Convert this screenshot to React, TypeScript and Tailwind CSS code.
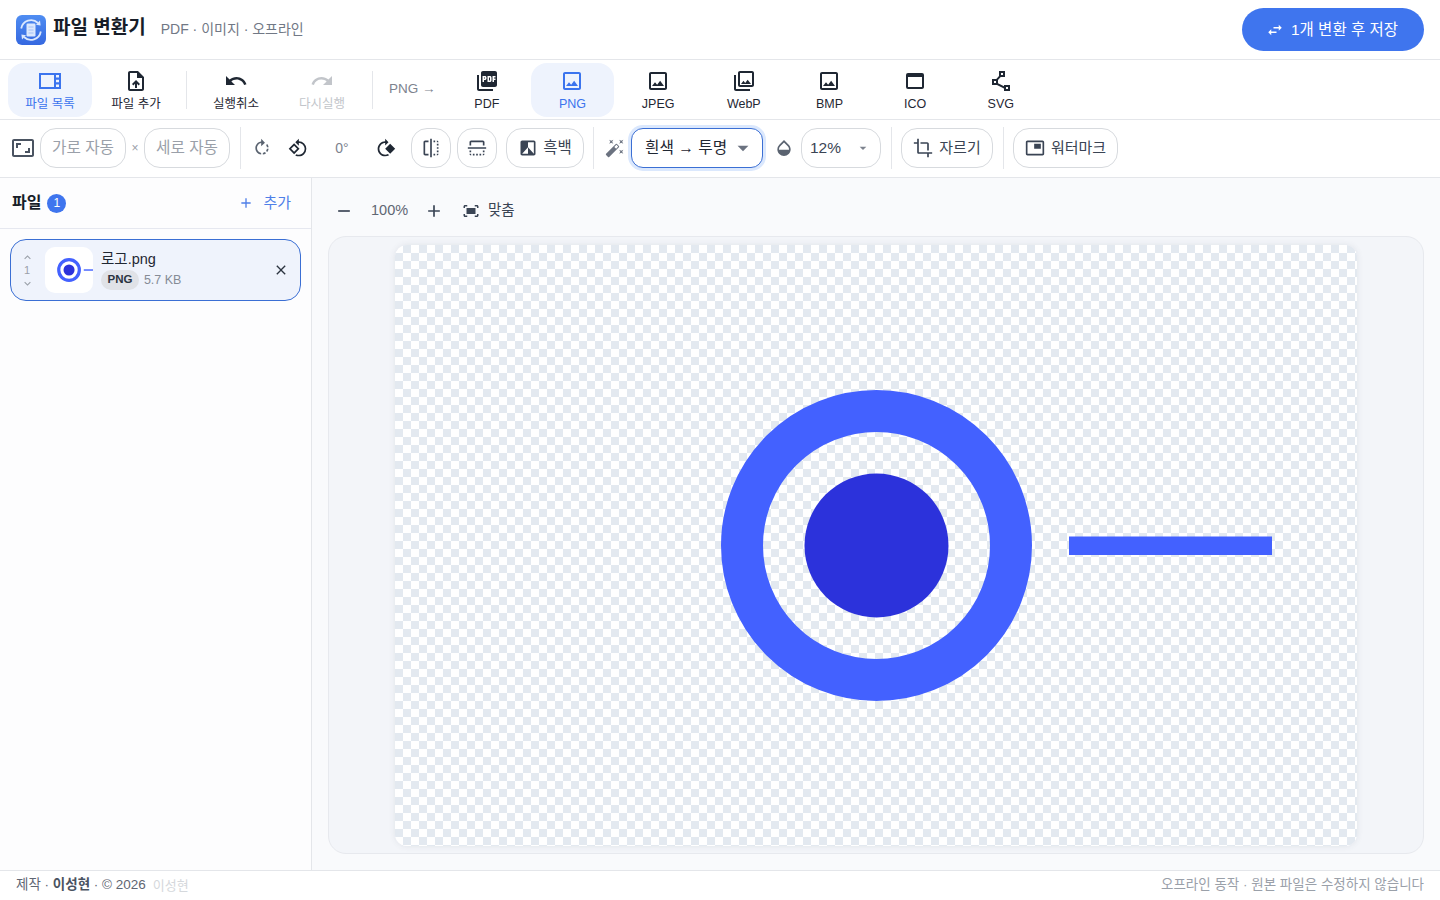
import React from "react";
import {
  MdOutlineUploadFile, MdUndo, MdRedo, MdPictureAsPdf, MdOutlineImage, MdOutlinePhotoLibrary,
  MdOutlineWebAsset, MdOutlinePolyline, MdOutlineAspectRatio, MdRotateRight, MdOutlineRotate90DegreesCcw,
  MdRotate90DegreesCw, MdFlip, MdFilterBAndW, MdAutoFixHigh, MdOpacity, MdCrop, MdPictureInPicture,
  MdFitScreen, MdSwapHoriz, MdAdd, MdRemove, MdClose, MdKeyboardArrowUp, MdKeyboardArrowDown, MdArrowDropDown,
} from "react-icons/md";

const font = { fontFamily: '"Liberation Sans", "Noto Sans CJK KR", sans-serif' };

function FileListIcon() {
  return (
    <svg width="24" height="24" viewBox="0 0 24 24" fill="currentColor">
      <path fillRule="evenodd" d="M1 4h22v16H1zM3 6v12h13V6zM18 6v2.5h3V6zM18 10.7v2.6h3v-2.6zM18 15.5V18h3v-2.5z" />
    </svg>
  );
}

function Logo() {
  return (
    <svg width="30" height="30" viewBox="0 0 30 30">
      <defs>
        <linearGradient id="lg" x1="0" y1="0" x2="0" y2="1">
          <stop offset="0" stopColor="#4f8df2" />
          <stop offset="1" stopColor="#3568e0" />
        </linearGradient>
      </defs>
      <rect width="30" height="30" rx="6" fill="url(#lg)" />
      <path d="M5.2 13.5A10 10 0 0 1 22 8" fill="none" stroke="#dbe8fd" strokeWidth="1.8" />
      <path d="M24.8 16.5A10 10 0 0 1 8 22" fill="none" stroke="#dbe8fd" strokeWidth="1.8" />
      <path d="M20 9.8l4.6.6-.6-4.8z" fill="#dbe8fd" />
      <path d="M10 20.2l-4.6-.6.6 4.8z" fill="#dbe8fd" />
      <rect x="10.5" y="8.5" width="9" height="13" rx="1.2" fill="#dbe8fd" />
      <path d="M12.5 12h5M12.5 15h5M12.5 18h5" stroke="#9dbcf5" strokeWidth="0.9" />
    </svg>
  );
}

function TopBtn({ icon, label, active, disabled, className = "w-[84px]" }: { icon: React.ReactNode; label: string; active?: boolean; disabled?: boolean; className?: string }) {
  const color = active ? "text-[#3b74ee] bg-[#eef3fd]" : disabled ? "text-[#c2c5ca]" : "text-[#1f2733]";
  return (
    <div className={`${className} h-[54px] shrink-0 rounded-2xl flex flex-col items-center justify-center pt-[1px] ${color}`}>
      <div className="h-[24px] w-[24px] mb-[4px]">{icon}</div>
      <div className="text-[12.5px] leading-[15px]">{label}</div>
    </div>
  );
}

function Pill({ children, className = "" }: { children: React.ReactNode; className?: string }) {
  return (
    <div className={`h-[40px] shrink-0 rounded-2xl border border-[#d7dade] bg-white flex items-center justify-center text-[#3a4454] ${className}`}>
      {children}
    </div>
  );
}

const Sep = ({ className = "" }: { className?: string }) => <div className={`w-px bg-[#e4e6ea] shrink-0 ${className}`} />;

function LogoArt({ className }: { className?: string }) {
  return (
    <svg viewBox="0 0 962 601" className={className}>
      <circle cx="481.5" cy="300.5" r="134.5" fill="none" stroke="#4361ff" strokeWidth="42" />
      <circle cx="481.5" cy="300.5" r="72" fill="#2c32db" />
      <rect x="674" y="291.5" width="203" height="18.5" fill="#4361ff" />
    </svg>
  );
}

export default function App() {
  return (
    <div style={font} className="w-[1440px] h-[900px] flex flex-col overflow-hidden bg-white text-[#1f2733]">
      {/* Header */}
      <header className="h-[60px] shrink-0 border-b border-[#e4e6ea] flex items-center justify-between pl-4 pr-4">
        <div className="flex items-center">
          <Logo />
          <div className="ml-[7px] text-[19px] font-bold leading-[24px] text-[#171d28] -mt-[3px]">파일 변환기</div>
          <div className="ml-[15px] text-[14px] text-[#717885]">PDF · 이미지 · 오프라인</div>
        </div>
        <div className="w-[182px] h-[43px] rounded-full bg-[#3f75ee] text-white flex items-center justify-center gap-[7px] text-[15.5px] pr-[2px]">
          <MdSwapHoriz size={18} />
          <span>1개 변환 후 저장</span>
        </div>
      </header>

      {/* Toolbar 1 */}
      <div className="h-[60px] shrink-0 border-b border-[#e4e6ea] flex items-center pl-2 gap-[2px]">
        <TopBtn active label="파일 목록" icon={<FileListIcon />} />
        <TopBtn label="파일 추가" icon={<MdOutlineUploadFile size={24} />} />
        <Sep className="h-[38px] ml-[6px] mr-[5px]" />
        <TopBtn label="실행취소" icon={<MdUndo size={24} />} />
        <TopBtn disabled label="다시실행" icon={<MdRedo size={24} />} />
        <Sep className="h-[38px] ml-[6px] mr-[5px]" />
        <div className="w-[63px] pl-[9px] text-[13.5px] text-[#7d838e] -mt-[1px] shrink-0">PNG →</div>
        <TopBtn className="w-[83.67px]" label="PDF" icon={<MdPictureAsPdf size={24} />} />
        <TopBtn className="w-[83.67px]" active label="PNG" icon={<MdOutlineImage size={24} />} />
        <TopBtn className="w-[83.67px]" label="JPEG" icon={<MdOutlineImage size={24} />} />
        <TopBtn className="w-[83.67px]" label="WebP" icon={<MdOutlinePhotoLibrary size={24} />} />
        <TopBtn className="w-[83.67px]" label="BMP" icon={<MdOutlineImage size={24} />} />
        <TopBtn className="w-[83.67px]" label="ICO" icon={<MdOutlineWebAsset size={24} />} />
        <TopBtn className="w-[83.67px]" label="SVG" icon={<MdOutlinePolyline size={24} />} />
      </div>

      {/* Toolbar 2 */}
      <div className="h-[58px] shrink-0 border-b border-[#e4e6ea] flex items-center pl-[11px] pb-[1px] text-[#3a4454]">
        <MdOutlineAspectRatio size={24} className="shrink-0 mr-[5px] text-[#4a5361]" />
        <Pill className="w-[86px] text-[15.7px] !text-[#9aa0a9]">가로 자동</Pill>
        <span className="w-[18px] text-center text-[12px] text-[#9aa0a9]">×</span>
        <Pill className="w-[86px] text-[15.7px] !text-[#9aa0a9]">세로 자동</Pill>
        <Sep className="h-[42px] ml-[10px]" />
        <div className="w-[20px] ml-[11px] shrink-0"><MdRotateRight size={20} className="text-[#5a6370]" /></div>
        <div className="w-[20px] ml-[16px] shrink-0"><MdOutlineRotate90DegreesCcw size={20} className="text-[#1f2733]" /></div>
        <div className="w-[68px] text-center text-[14px] text-[#7d838e] shrink-0">0°</div>
        <div className="w-[20px] shrink-0"><MdRotate90DegreesCw size={20} className="text-[#1f2733]" /></div>
        <Pill className="w-[40px] ml-[15px]"><MdFlip size={20} /></Pill>
        <Pill className="w-[40px] ml-[6px]"><MdFlip size={20} className="rotate-90" /></Pill>
        <Pill className="w-[78px] ml-[9px] gap-[5px] text-[15.5px]"><MdFilterBAndW size={20} /><span>흑백</span></Pill>
        <Sep className="h-[42px] ml-[9px]" />
        <MdAutoFixHigh size={20} className="ml-[11px] shrink-0 text-[#6b7280]" />
        <div className="ml-[6px] w-[132px] h-[40px] shrink-0 rounded-xl border border-[#3b6fd4] bg-white ring-[3px] ring-[#dbe8fd] flex items-center pl-[13px] text-[15.7px] text-[#1f2733]">
          <span>흰색 → 투명</span>
          <MdArrowDropDown size={26} className="ml-[3px] text-[#6b7280]" />
        </div>
        <MdOpacity size={20} className="ml-[11px] shrink-0 text-[#5a6370]" />
        <Pill className="w-[80px] ml-[7px] !justify-start pl-[8px] text-[15.5px]">
          <span>12%</span>
          <MdArrowDropDown size={16} className="ml-[14px] text-[#7d838e]" />
        </Pill>
        <Sep className="h-[42px] ml-[10px]" />
        <Pill className="w-[92px] ml-[9px] gap-[6px] text-[15px]"><MdCrop size={20} /><span>자르기</span></Pill>
        <Sep className="h-[42px] ml-[10px]" />
        <Pill className="w-[105px] ml-[9px] gap-[6px] text-[15px]"><MdPictureInPicture size={20} /><span>워터마크</span></Pill>
      </div>

      {/* Body */}
      <div className="flex-1 min-h-0 flex">
        <aside className="w-[312px] shrink-0 border-r border-[#e4e6ea] bg-[#fdfdfe]">
          <div className="h-[51px] border-b border-[#e6e8f0] flex items-center pl-3 pr-[20px]">
            <span className="text-[16px] font-bold text-[#171d28]">파일</span>
            <span className="ml-[6px] w-[19px] h-[19px] rounded-full bg-[#3f75ee] text-white text-[12px] flex items-center justify-center">1</span>
            <div className="ml-auto flex items-center gap-[9px] text-[#4f7fe8] text-[15px]">
              <MdAdd size={16} />
              <span>추가</span>
            </div>
          </div>
          <div className="px-[10px] pt-[10px]">
            <div className="h-[62px] rounded-2xl border border-[#3b6fd4] bg-[#eff3fc] flex items-center pl-[10px] pr-[11px]">
              <div className="w-[12px] flex flex-col items-center text-[#9aa0a9] text-[11px] leading-[13px]">
                <MdKeyboardArrowUp size={13} />
                <span>1</span>
                <MdKeyboardArrowDown size={13} />
              </div>
              <div className="ml-[12px] w-[48px] h-[46px] rounded-[10px] bg-white flex items-center justify-center shrink-0 overflow-hidden">
                <LogoArt className="w-[74px] h-[46px] shrink-0" />
              </div>
              <div className="ml-[8px] flex flex-col">
                <span className="text-[14.5px] leading-[18px] text-[#1f2733]">로고.png</span>
                <div className="mt-[2px] flex items-center gap-[5px]">
                  <span className="h-[20px] px-[6.5px] rounded-full bg-[#e0e2e7] text-[11.5px] font-bold text-[#2c3440] flex items-center">PNG</span>
                  <span className="text-[12.5px] text-[#858b96]">5.7 KB</span>
                </div>
              </div>
              <MdClose size={16} className="ml-auto text-[#2c3440]" />
            </div>
          </div>
        </aside>

        <main className="flex-1 min-w-0 bg-[#f9fafc] flex flex-col pl-4 pr-4 pb-4">
          <div className="h-[58px] shrink-0 flex items-center text-[#3a4454] pt-[8px]">
            <MdRemove size={20} className="ml-[6px]" />
            <span className="ml-[17px] text-[14.5px] text-[#5f6673] w-[38px]">100%</span>
            <MdAdd size={20} className="ml-[15px]" />
            <MdFitScreen size={18} className="ml-[18px]" />
            <span className="ml-[8px] text-[14.5px]">맞춤</span>
          </div>
          <div className="flex-1 min-h-0 rounded-[18px] border border-[#e7e9ee] bg-[#f3f5f9] flex items-center justify-center">
            <div className="w-[962px] h-[601px] rounded-xl overflow-hidden shadow-[0_0_6px_rgba(60,70,90,0.1)] bg-[conic-gradient(#e3e9f0_25%,#ffffff_0_50%,#e3e9f0_0_75%,#ffffff_0)] bg-[length:16px_16px]">
              <LogoArt className="w-[962px] h-[601px]" />
            </div>
          </div>
        </main>
      </div>

      {/* Footer */}
      <footer className="h-[30px] shrink-0 border-t border-[#e4e6ea] bg-white flex items-center justify-between px-4 text-[13.5px] text-[#7d838e]">
        <div className="flex items-center">
          <span className="text-[#5f6673]">제작 · <b className="text-[#4a5361]">이성현</b> · © 2026</span>
          <span className="ml-[7px] text-[13px] text-[#d5d8dc]">이성현</span>
        </div>
        <span className="text-[#9aa0a9]">오프라인 동작 · 원본 파일은 수정하지 않습니다</span>
      </footer>
    </div>
  );
}
